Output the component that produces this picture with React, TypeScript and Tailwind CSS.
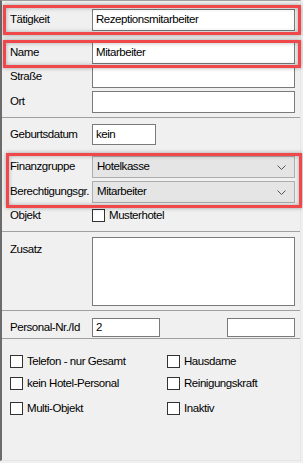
import React from "react";

const FONT = { fontFamily: '"Liberation Sans", Arial, sans-serif' };

function Field({ label, value = "", w = "w-[203px]", h = "h-[22px]", mt }: { label: string; value?: string; w?: string; h?: string; mt: string }) {
  return (
    <div className={`flex items-center pl-[8px] ${mt}`}>
      <span className="w-[82px] shrink-0 whitespace-nowrap text-black">{label}</span>
      <div className={`${w} ${h} flex items-center border border-[#7a7a7a] bg-white pl-[3px] text-black`}>{value}</div>
    </div>
  );
}

function Select({ label, value, mt }: { label: string; value: string; mt: string }) {
  return (
    <div className={`flex items-center pl-[8px] ${mt}`}>
      <span className="w-[82px] shrink-0 whitespace-nowrap text-black">{label}</span>
      <div className="flex h-[22px] w-[203px] items-center justify-between border border-[#adadad] bg-[#e5e5e5] pl-[4px] pr-[8px] text-black">
        <span>{value}</span>
        <svg width="9" height="5" viewBox="0 0 9 5" fill="none">
          <path d="M0.5 0.5 L4.5 4.5 L8.5 0.5" stroke="#555" strokeWidth="1" />
        </svg>
      </div>
    </div>
  );
}

function Check({ label }: { label: string }) {
  return (
    <div className="flex items-center gap-[4px]">
      <span className="h-[13px] w-[13px] shrink-0 border border-[#333] bg-white" />
      <span className="whitespace-nowrap text-black">{label}</span>
    </div>
  );
}

function Sep({ mt }: { mt: string }) {
  return <div className={`${mt} h-[1px] bg-[#a0a0a0]`} />;
}

function Mark({ cls }: { cls: string }) {
  return (
    <div
      className={`pointer-events-none absolute border-[3px] border-[#f0474a] shadow-[0_0_4px_rgba(0,0,0,0.35),inset_0_0_4px_rgba(0,0,0,0.3)] ${cls}`}
    />
  );
}

function CheckRow({ a, b, mt }: { a: string; b: string; mt: string }) {
  return (
    <div className={`grid grid-cols-[157px_1fr] pl-[8px] ${mt}`}>
      <Check label={a} />
      <Check label={b} />
    </div>
  );
}

export default function App() {
  return (
    <div className="relative h-[463px] w-[303px] bg-[#f0f0f0] text-[11.5px] leading-none tracking-[-0.45px]" style={FONT}>
      <div className="flex h-[461px] w-[301px] flex-col border-b border-l-2 border-r border-t border-b-[#e6e6e6] border-l-[#6b6b6b] border-r-[#e6e6e6] border-t-[#a0a0a0]">
        <Field label="Tätigkeit" value="Rezeptionsmitarbeiter" mt="mt-[8px]" />
        <Field label="Name" value="Mitarbeiter" mt="mt-[11px]" />
        <Field label="Straße" mt="mt-[2px]" />
        <Field label="Ort" mt="mt-[3px]" />
        <Sep mt="mt-[4px]" />
        <Field label="Geburtsdatum" value="kein" w="w-[64px]" h="h-[21px]" mt="mt-[6px]" />
        <Select label="Finanzgruppe" value="Hotelkasse" mt="mt-[11px]" />
        <Select label="Berechtigungsgr." value="Mitarbeiter" mt="mt-[3px]" />
        <div className="mt-[6px] flex items-center pl-[8px]">
          <span className="w-[82px] shrink-0 text-black">Objekt</span>
          <Check label="Musterhotel" />
        </div>
        <Sep mt="mt-[9px]" />
        <div className="mt-[5px] flex items-start pl-[8px]">
          <span className="mt-[7px] w-[82px] shrink-0 text-black">Zusatz</span>
          <div className="h-[69px] w-[203px] border border-[#7a7a7a] bg-white" />
        </div>
        <Sep mt="mt-[4px]" />
        <div className="mt-[7px] flex items-center pl-[8px]">
          <span className="w-[82px] shrink-0 whitespace-nowrap text-black">Personal-Nr./Id</span>
          <div className="flex h-[19px] w-[68px] items-center border border-[#7a7a7a] bg-white pl-[3px] text-black">2</div>
          <div className="ml-[67px] h-[19px] w-[68px] border border-[#7a7a7a] bg-white" />
        </div>
        <Sep mt="mt-[1px]" />
        <CheckRow a="Telefon - nur Gesamt" b="Hausdame" mt="mt-[16px]" />
        <CheckRow a="kein Hotel-Personal" b="Reinigungskraft" mt="mt-[9px]" />
        <CheckRow a="Multi-Objekt" b="Inaktiv" mt="mt-[12px]" />
      </div>
      <Mark cls="left-[3px] top-[5px] h-[30px] w-[298px]" />
      <Mark cls="left-[3px] top-[40px] h-[28px] w-[298px]" />
      <Mark cls="left-[6px] top-[153px] h-[55px] w-[296px]" />
    </div>
  );
}
